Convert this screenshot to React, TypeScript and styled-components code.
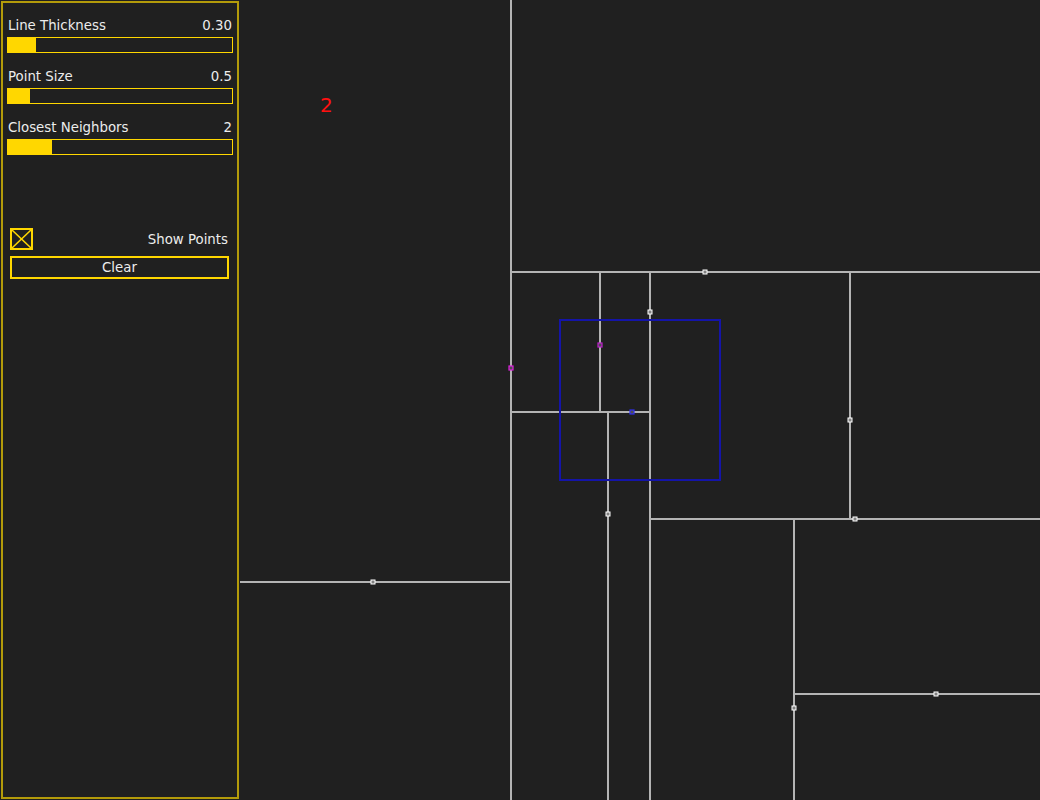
import React from "react";
import styled, { createGlobalStyle } from "styled-components";

const Global = createGlobalStyle`
  html, body { margin: 0; padding: 0; background: #202020; }
  body { font-family: "DejaVu Sans", "Liberation Sans", sans-serif; }
  #root { width: 1040px; height: 800px; }
`;

const Page = styled.div`
  display: flex;
  width: 1040px;
  height: 800px;
  background: #202020;
  overflow: hidden;
`;

const Panel = styled.aside`
  box-sizing: border-box;
  width: 238px;
  height: 798px;
  margin: 1px 0 0 1px;
  border: 2px solid #b39b0a;
  padding: 14px 4px 0 4px;
  display: flex;
  flex-direction: column;
  flex-shrink: 0;
`;

const Group = styled.div`
  display: flex;
  flex-direction: column;
  gap: 4px;
  margin-bottom: 15px;
`;

const LabelRow = styled.div`
  display: flex;
  justify-content: space-between;
  align-items: flex-start;
  height: 16px;
  line-height: 18px;
  font-size: 13.33px;
  color: #ececec;
  padding: 0 1px 0 1px;
`;

const Track = styled.div`
  box-sizing: border-box;
  height: 16px;
  width: 226px;
  border: 1px solid #ffd700;
  background: #202020;
`;

const Fill = styled.div`
  height: 100%;
  background: #ffd700;
`;

const Controls = styled.div`
  margin-top: 58px;
  padding: 0 4px 0 3px;
  display: flex;
  flex-direction: column;
  gap: 6px;
`;

const CheckRow = styled.div`
  display: flex;
  align-items: center;
  justify-content: space-between;
  height: 22px;
`;

const CheckBox = styled.div`
  box-sizing: border-box;
  width: 23px;
  height: 22px;
  border: 2px solid #ffd700;
  display: flex;
`;

const CheckLabel = styled.span`
  font-size: 13.33px;
  color: #ececec;
  padding-right: 1px;
`;

const ClearButton = styled.button`
  box-sizing: border-box;
  width: 219px;
  height: 23px;
  border: 2px solid #ffd700;
  background: transparent;
  color: #ececec;
  font-family: "DejaVu Sans", sans-serif;
  font-size: 13.33px;
  padding: 0;
  margin: 0;
`;

const Canvas = styled.svg`
  display: block;
  flex: 1;
  height: 800px;
  margin-left: 1px;
`;

const sliders = [
  { label: "Line Thickness", value: "0.30", fill: 28 },
  { label: "Point Size", value: "0.5", fill: 22 },
  { label: "Closest Neighbors", value: "2", fill: 44 },
];

const OX = 240;
const lines: [number, number, number, number][] = [
  [511, 0, 511, 800],
  [511, 272, 1040, 272],
  [600, 272, 600, 412],
  [650, 272, 650, 800],
  [511, 412, 650, 412],
  [608, 412, 608, 800],
  [850, 272, 850, 519],
  [650, 519, 1040, 519],
  [794, 519, 794, 800],
  [794, 694, 1040, 694],
  [240, 582, 511, 582],
];

const points: [number, number][] = [
  [705, 272],
  [650, 312],
  [850, 420],
  [855, 519],
  [608, 514],
  [373, 582],
  [936, 694],
  [794, 708],
];

const special: [number, number, string][] = [
  [511, 368, "#e020e0"],
  [600, 345, "#c020d0"],
  [632, 412, "#3030f0"],
];

export default function App() {
  return (
    <>
      <Global />
      <Page>
        <Panel>
          {sliders.map((s) => (
            <Group key={s.label}>
              <LabelRow>
                <span>{s.label}</span>
                <span>{s.value}</span>
              </LabelRow>
              <Track>
                <Fill style={{ width: s.fill }} />
              </Track>
            </Group>
          ))}
          <Controls>
            <CheckRow>
              <CheckBox>
                <svg width="19" height="18" viewBox="0 0 19 18">
                  <line x1="0" y1="0" x2="19" y2="18" stroke="#ffd700" strokeWidth="1.5" />
                  <line x1="19" y1="0" x2="0" y2="18" stroke="#ffd700" strokeWidth="1.5" />
                </svg>
              </CheckBox>
              <CheckLabel>Show Points</CheckLabel>
            </CheckRow>
            <ClearButton>Clear</ClearButton>
          </Controls>
        </Panel>
        <Canvas viewBox="0 0 800 800" width="800" height="800">
          <text x={80} y={112} fill="#ff1010" fontSize="20" fontFamily="DejaVu Sans, sans-serif">2</text>
          {lines.map(([x1, y1, x2, y2], i) => (
            <line key={i} x1={x1 - OX} y1={y1} x2={x2 - OX} y2={y2} stroke="#b4b4b4" strokeWidth="2" />
          ))}
          <rect x={560 - OX} y={320} width={160} height={160} fill="none" stroke="#1414a8" strokeWidth="2" />
          {points.map(([x, y], i) => (
            <rect key={i} x={x - OX - 2} y={y - 2} width={4} height={4} fill="#808080" stroke="#ffffff" strokeWidth="1" />
          ))}
          {special.map(([x, y, c], i) => (
            <rect key={"s" + i} x={x - OX - 2} y={y - 2} width={4} height={4} fill="#505050" stroke={c} strokeWidth="1.2" />
          ))}
        </Canvas>
      </Page>
    </>
  );
}
